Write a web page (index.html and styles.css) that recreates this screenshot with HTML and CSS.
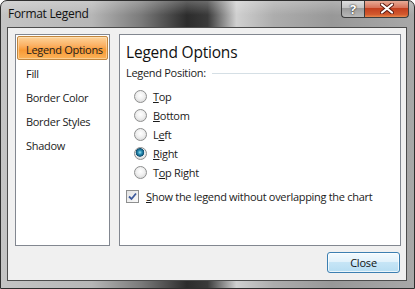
FILE: index.html
```html
<!DOCTYPE html>
<html lang="en">
<head>
    <meta charset="UTF-8">
    <title>Format Legend</title>
    <link rel="stylesheet" href="styles.css">
</head>
<body>
    <div class="window">
        <div class="titlebar">
            <span class="title">Format Legend</span>
            <div class="caption-btns">
                <span class="cap-btn help">?</span>
                <span class="cap-btn close">
                    <svg width="14" height="11" viewBox="0 0 14 11">
                        <path d="M2 1.5 L12 9.5 M12 1.5 L2 9.5" stroke="#5a1a10" stroke-width="4" stroke-linecap="round"/>
                        <path d="M2 1.5 L12 9.5 M12 1.5 L2 9.5" stroke="#ffffff" stroke-width="2.2" stroke-linecap="round"/>
                    </svg>
                </span>
            </div>
        </div>
        <div class="client">
            <div class="panels">
                <ul class="nav">
                    <li class="nav-item active">Legend Options</li>
                    <li class="nav-item">Fill</li>
                    <li class="nav-item">Border Color</li>
                    <li class="nav-item">Border Styles</li>
                    <li class="nav-item">Shadow</li>
                </ul>
                <div class="content">
                    <div class="heading">Legend Options</div>
                    <div class="group-label">
                        <span>Legend Position:</span>
                        <span class="rule"></span>
                    </div>
                    <div class="radios">
                        <label class="radio"><span class="radio-dot"></span><span><u>T</u>op</span></label>
                        <label class="radio"><span class="radio-dot"></span><span><u>B</u>ottom</span></label>
                        <label class="radio"><span class="radio-dot"></span><span>L<u>e</u>ft</span></label>
                        <label class="radio"><span class="radio-dot checked"></span><span><u>R</u>ight</span></label>
                        <label class="radio"><span class="radio-dot"></span><span>T<u>o</u>p Right</span></label>
                    </div>
                    <label class="check">
                        <span class="check-box">
                            <svg width="9" height="9" viewBox="0 0 9 9">
                                <path d="M1 4.5 L3.5 7 L8 1.5" fill="none" stroke="#3d5a9c" stroke-width="1.8"/>
                            </svg>
                        </span>
                        <span><u>S</u>how the legend without overlapping the chart</span>
                    </label>
                </div>
            </div>
            <div class="footer">
                <button class="btn">Close</button>
            </div>
        </div>
    </div>
</body>
</html>
```

FILE: styles.css
```css
:root {
    --text: #1b1b1b;
    --panel-border: #828790;
    --client: #f0f0f0;
    --ui-font: 'Open Sans', 'Noto Sans', sans-serif;
}

body {
    margin: 0;
    background: #ffffff;
    font-family: var(--ui-font);
    color: var(--text);
    font-size: 11px;
    letter-spacing: -0.3px;
    white-space: nowrap;
}

.window {
    width: 415px;
    height: 289px;
    box-sizing: border-box;
    display: flex;
    flex-direction: column;
    border: 1px solid #2e2e2e;
    border-radius: 7px 7px 0 0;
    background:
        linear-gradient(180deg, rgba(255,255,255,0.25) 0px, rgba(255,255,255,0) 14px),
        linear-gradient(90deg, #c4c4c4 0%, #b6b6b6 22%, #7a7a7a 34%, #2c2c2c 45%, #3a3a3a 50%, #d0d0d0 57%, #adadad 66%, #989898 80%, #a8a8a8 100%);
    overflow: hidden;
}

.titlebar {
    height: 26px;
    display: flex;
    align-items: flex-start;
    justify-content: space-between;
    padding-left: 7px;
}

.title {
    font-size: 12px;
    letter-spacing: -0.3px;
    line-height: 16px;
    margin-top: 5px;
    color: #111;
}

.caption-btns {
    display: flex;
    margin-right: 5px;
    margin-top: -1px;
}

.cap-btn {
    height: 18px;
    display: flex;
    align-items: center;
    justify-content: center;
    box-sizing: border-box;
    border: 1px solid #3d3d3d;
    border-top: none;
}

.help {
    width: 23px;
    border-radius: 0 0 0 4px;
    border-right: none;
    background: linear-gradient(180deg, #e2e2e2 0%, #c4c4c4 45%, #9c9c9c 50%, #b8b8b8 100%);
    color: #fff;
    font-weight: 700;
    font-size: 13px;
    text-shadow: 0 0 2px #333, 0 0 1px #222;
}

.close {
    width: 45px;
    border-radius: 0 0 4px 0;
    background: linear-gradient(180deg, #eab3a0 0%, #d7735a 45%, #c4401f 50%, #d2592e 85%, #e8894e 100%);
}

.client {
    flex: 1;
    margin: 0 7px 7px 6px;
    border: 1px solid #4c4c4c;
    background: var(--client);
    padding: 6px 5px 0 7px;
    display: flex;
    flex-direction: column;
}

.panels {
    height: 212px;
    display: flex;
    gap: 9px;
}

.nav {
    list-style: none;
    margin: 0;
    width: 95px;
    box-sizing: border-box;
    padding: 1px;
    background: #fff;
    border: 1px solid var(--panel-border);
}

.nav-item {
    height: 24px;
    line-height: 23px;
    padding: 1px 0 0 8px;
    border: 1px solid transparent;
    border-radius: 2px;
    box-sizing: border-box;
}

.nav-item.active {
    border-color: #c3873e;
    background: linear-gradient(180deg, #fdd39a 0%, #fbb062 40%, #f89a35 60%, #fbb35a 100%);
    box-shadow: inset 0 0 0 1px rgba(255,235,200,0.5);
}

.content {
    width: 282px;
    box-sizing: border-box;
    background: #fff;
    border: 1px solid var(--panel-border);
    padding: 6px 6px 0 6px;
}

.heading {
    font-size: 15.5px;
    letter-spacing: -0.2px;
    line-height: 22px;
    color: #111;
}

.group-label {
    display: flex;
    align-items: center;
    gap: 6px;
    margin-top: 2px;
    line-height: 16px;
}

.rule {
    flex: 1;
    height: 1px;
    background: #d5dfe5;
    margin-right: 4px;
}

.radios {
    margin-top: 6px;
    margin-left: 8px;
    display: flex;
    flex-direction: column;
}

.radio {
    height: 19px;
    display: flex;
    align-items: center;
    gap: 6px;
}

.radio-dot {
    width: 13px;
    height: 13px;
    box-sizing: border-box;
    border-radius: 50%;
    border: 1px solid #8e8f8f;
    background: radial-gradient(circle at 50% 40%, #ffffff 0%, #f0f0f0 45%, #cfcfcf 100%);
}

.radio-dot.checked {
    background:
        radial-gradient(circle at 45% 40%, #9ee3f2 0px, #2a8fb5 2px, #0e4f72 4px, rgba(14,79,114,0) 4.6px),
        radial-gradient(circle at 50% 40%, #ffffff 0%, #f0f0f0 45%, #cfcfcf 100%);
}

.check {
    margin-top: 5px;
    height: 19px;
    display: flex;
    align-items: center;
    gap: 7px;
}

.check-box {
    width: 13px;
    height: 13px;
    box-sizing: border-box;
    border: 1px solid #8e8f8f;
    background: linear-gradient(135deg, #e3e3e3 0%, #fafafa 100%);
    display: flex;
    align-items: center;
    justify-content: center;
}

.footer {
    display: flex;
    justify-content: flex-end;
    margin-top: 6px;
    padding-right: 1px;
}

.btn {
    width: 73px;
    height: 21px;
    padding: 0;
    font-family: var(--ui-font);
    font-size: 11px;
    letter-spacing: -0.2px;
    color: #111;
    border: 1px solid #3c7fb1;
    border-radius: 3px;
    background: linear-gradient(180deg, #f3fafe 0%, #e2f2fb 45%, #c6e5f6 50%, #b6ddf2 100%);
    box-shadow: inset 0 0 0 1px rgba(255,255,255,0.7);
}
```
